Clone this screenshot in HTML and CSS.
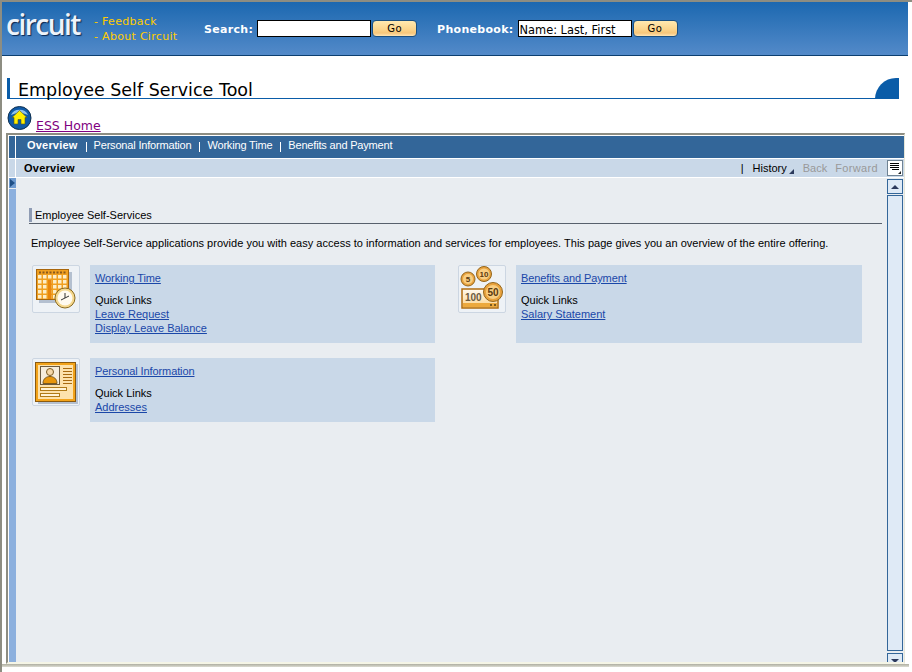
FILE: index.html
```html
<!DOCTYPE html>
<html lang="en">
<head>
    <meta charset="UTF-8">
    <meta name="viewport" content="width=device-width, initial-scale=1.0">
    <title>Employee Self Service Tool</title>
    <link rel="stylesheet" href="styles.css">
</head>
<body>
<div class="page">

    <div class="topbar">
        <div class="logo">circuit</div>
        <ul class="toplinks">
            <li><a href="#">- Feedback</a></li>
            <li><a href="#">- About Circuit</a></li>
        </ul>
        <form class="topsearch search-main">
            <label for="search">Search:</label>
            <input type="text" id="search">
            <button type="button">Go</button>
        </form>
        <form class="topsearch search-phone">
            <label for="phone">Phonebook:</label>
            <input type="text" id="phone" value="Name: Last, First">
            <button type="button">Go</button>
        </form>
    </div>

    <div class="titlebar">
        <h1>Employee Self Service Tool</h1>
        <div class="title-corner"></div>
    </div>

    <div class="homerow">
        <svg class="home-icon" width="25" height="24" viewBox="0 0 25 24">
            <circle cx="12.5" cy="12" r="11.5" fill="#0f5aa8" stroke="#10304f"/>
            <path d="M4 9a9 8 0 0 1 17 0a14 9 0 0 0-17 0z" fill="#8fc0ea"/>
            <path d="M12.5 4.5L20 11.5H18V18H14V13.5H11V18H7V11.5H5z" fill="#ffee00" stroke="#5a5a10" stroke-width=".6"/>
        </svg>
        <a href="#" class="homelink">ESS Home</a>
    </div>

    <div class="portal">
        <div class="tabbar">
            <div class="tab-strip"></div>
            <ul class="tabs">
                <li class="active">Overview</li>
                <li>Personal Information</li>
                <li>Working Time</li>
                <li>Benefits and Payment</li>
            </ul>
        </div>

        <div class="pagebar">
            <div class="pagebar-strip"></div>
            <div class="pagebar-title">Overview</div>
            <div class="history">
                <span class="sep">|</span>
                <span class="hist-link">History<i class="corner"></i></span>
                <span class="disabled">Back</span>
                <span class="disabled forward">Forward</span>
            </div>
            <div class="menu-btn">
                <svg width="14" height="14" viewBox="0 0 14 14">
                    <path d="M2 2.500h9M2 4.500h9M2 6.500h9M4 8.500h7" stroke="#000" fill="none"/>
                    <path d="M13 10v3h-3z" fill="#222"/>
                </svg>
            </div>
        </div>

        <div class="work">
            <div class="nav-strip"><div class="nav-toggle"></div></div>

            <div class="content">
                <h2 class="section-head"><span>Employee Self-Services</span></h2>
                <p class="intro">Employee Self-Service applications provide you with easy access to information and services for employees. This page gives you an overview of the entire offering.</p>

                <div class="cards">
                    <div class="card">
                        <div class="card-icon">
                            <svg width="46" height="46" viewBox="0 0 46 46">
                                <defs>
                                    <pattern id="calCells" x="5" y="9" width="5" height="5" patternUnits="userSpaceOnUse">
                                        <rect width="3.500" height="3.500" fill="#fdeec8"/>
                                    </pattern>
                                </defs>
                                <rect x="6" y="6" width="33" height="31" fill="#b4c0d0"/>
                                <rect x="3.500" y="3.500" width="32" height="30" fill="#f0a020" stroke="#a8660c"/>
                                <path d="M6 6.500h28" stroke="#8a5a1c" stroke-dasharray="2 1.500" stroke-width="2"/>
                                <rect x="5" y="9" width="29" height="24" fill="url(#calCells)"/>
                                <rect x="15" y="14" width="3.500" height="19" fill="#e8860c"/>
                                <circle cx="32" cy="32" r="10" fill="#f5d88e" stroke="#8a6a20"/>
                                <circle cx="32" cy="32" r="7.500" fill="#fffaf0"/>
                                <path d="M32 27v5l-4 2M32 32l4-2" stroke="#333" fill="none"/>
                            </svg>
                        </div>
                        <div class="card-body">
                            <a href="#" class="card-title">Working Time</a>
                            <div class="quick">Quick Links</div>
                            <a href="#">Leave Request</a>
                            <a href="#">Display Leave Balance</a>
                        </div>
                    </div>

                    <div class="card card-right">
                        <div class="card-icon">
                            <svg width="46" height="46" viewBox="0 0 46 46">
                                <defs>
                                    <linearGradient id="billFill" x1="0" y1="0" x2="0" y2="1">
                                        <stop offset="0" stop-color="#fffaf0"/>
                                        <stop offset="1" stop-color="#fcd48e"/>
                                    </linearGradient>
                                </defs>
                                <rect x="3" y="23" width="36" height="19" fill="url(#billFill)" stroke="#b06c10" stroke-width="1.500"/>
                                <rect x="4" y="37" width="34" height="4" fill="#eca93e"/>
                                <path d="M31 39h2M35 39h2" stroke="#7a5a20" stroke-width="2"/>
                                <text x="6" y="35" class="bill-text">100</text>
                                <circle cx="9" cy="13" r="7" fill="#e8a23e" stroke="#94661c"/>
                                <circle cx="9" cy="13" r="5" fill="#f8ce82"/>
                                <text x="9" y="16" class="coin-text">5</text>
                                <circle cx="25" cy="8" r="7.500" fill="#e8a23e" stroke="#94661c"/>
                                <circle cx="25" cy="8" r="5.500" fill="#f8ce82"/>
                                <text x="25" y="11" class="coin-text">10</text>
                                <circle cx="34" cy="26" r="9.500" fill="#e8a23e" stroke="#94661c"/>
                                <circle cx="34" cy="26" r="7" fill="#f8ce82"/>
                                <text x="34" y="30" class="coin-big">50</text>
                            </svg>
                        </div>
                        <div class="card-body">
                            <a href="#" class="card-title">Benefits and Payment</a>
                            <div class="quick">Quick Links</div>
                            <a href="#">Salary Statement</a>
                        </div>
                    </div>

                    <div class="card card-short">
                        <div class="card-icon">
                            <svg width="46" height="46" viewBox="0 0 46 46">
                                <rect x="5" y="5" width="40" height="40" fill="#b4c0d0"/>
                                <rect x="2.500" y="3.500" width="40" height="39" fill="#f2a31a" stroke="#8a5a10"/>
                                <rect x="5" y="6" width="35" height="34" fill="#fde2ac"/>
                                <rect x="7.500" y="7.500" width="19" height="18" fill="#f6eddc" stroke="#6a5a40"/>
                                <circle cx="17" cy="13" r="3.500" fill="#f6d8a8" stroke="#7a5a20"/>
                                <path d="M10 24.500c0-5 3.500-7 7-7s7 2 7 7z" fill="#e8960c" stroke="#7a5a20"/>
                                <path d="M30 9.500h9M30 12.500h9M30 15.500h9M30 18.500h9M30 21.500h9M30 24.500h9" stroke="#a86a10"/>
                                <rect x="7.500" y="28.500" width="26" height="3" fill="#fff3d8" stroke="#b07a18"/>
                                <rect x="7.500" y="34.500" width="19" height="3" fill="#fff3d8" stroke="#b07a18"/>
                            </svg>
                        </div>
                        <div class="card-body">
                            <a href="#" class="card-title">Personal Information</a>
                            <div class="quick">Quick Links</div>
                            <a href="#">Addresses</a>
                        </div>
                    </div>
                </div>
            </div>

            <div class="scrollbar">
                <div class="sb-btn"><span class="arrow-up"></span></div>
                <div class="sb-thumb"></div>
                <div class="sb-btn sb-down"><span class="arrow-down"></span></div>
            </div>
        </div>
    </div>

    <div class="bottomband"></div>
</div>
</body>
</html>
```

FILE: styles.css
```css
* {
    box-sizing: border-box;
}

html, body {
    margin: 0;
    padding: 0;
    height: 100%;
    overflow: hidden;
    background-color: #fff;
}

body {
    font-family: "Liberation Sans", Arial, sans-serif;
    font-size: 11px;
    color: #000;
}

.page {
    height: 672px;
    border-top: 2px solid #8d8d82;
    border-left: 2px solid #8d8d82;
    padding-right: 4px;
    display: flex;
    flex-direction: column;
}

/* top blue header */
.topbar {
    height: 54px;
    flex: none;
    background: linear-gradient(#1c68b0, #538ac9);
    border-bottom: 1px solid #0c3f70;
    display: flex;
    align-items: flex-start;
    font-family: "DejaVu Sans", sans-serif;
}

.logo {
    width: 85px;
    margin-left: 4px;
    margin-top: 4px;
    font-family: "Open Sans", sans-serif;
    font-size: 28px;
    font-weight: 600;
    line-height: 36px;
    letter-spacing: -1.5px;
    color: #eef3fa;
    text-shadow: 1px 1px 1px #0a2650;
}

.toplinks {
    list-style: none;
    margin: 12px 0 0 3px;
    padding: 0;
    width: 110px;
    font-size: 11px;
    line-height: 15px;
    letter-spacing: .3px;
}

.toplinks a {
    color: #ffcc00;
    text-decoration: none;
}

.topsearch {
    display: flex;
    align-items: center;
    margin: 18px 0 0;
}

.search-phone {
    margin-left: 20px;
}

.topsearch label {
    color: #fff;
    font-size: 11px;
    font-weight: bold;
    letter-spacing: .3px;
    margin-right: 4px;
    padding-top: 2px;
}

.topsearch input {
    width: 114px;
    height: 17px;
    padding: 3px 1px 0;
    border: 1px solid #000;
    border-radius: 0;
    background-color: #fff;
    font-family: "DejaVu Sans", sans-serif;
    font-size: 11.4px;
    color: #000;
}

.topsearch button {
    width: 45px;
    height: 17px;
    margin-left: 1px;
    padding: 0;
    border: 1px solid #1a4f80;
    border-radius: 4px;
    background: linear-gradient(#ffe9b0, #fbd58c 55%, #f7c67a 80%, #ffe5b5);
    font-family: "DejaVu Sans", sans-serif;
    font-size: 10px;
    letter-spacing: .5px;
    color: #000;
}

/* page title */
.titlebar {
    margin: 22px 0 0 5px;
    width: 892px;
    height: 21px;
    flex: none;
    border-left: 3px solid #0a5ca8;
    border-bottom: 1px solid #0a5ca8;
    display: flex;
    justify-content: space-between;
    align-items: flex-end;
}

.titlebar h1 {
    margin: 0 0 -2px 8px;
    font-family: "DejaVu Sans", sans-serif;
    font-size: 17.5px;
    line-height: 20px;
    font-weight: normal;
    white-space: nowrap;
}

.title-corner {
    width: 24px;
    height: 21px;
    margin-bottom: -1px;
    background-color: #0a5ca8;
    border-top-left-radius: 22px;
}

.homerow {
    height: 26px;
    flex: none;
    margin: 8px 0 0 5px;
    display: flex;
    align-items: flex-end;
}

.home-icon {
    margin-bottom: 3px;
}

.homelink {
    margin-left: 4px;
    font-family: "DejaVu Sans", sans-serif;
    font-size: 12.5px;
    line-height: 15px;
    color: #800080;
}

/* inner portal frame */
.portal {
    width: 899px;
    height: 531px;
    flex: none;
    margin-left: 4px;
    border-top: 2px solid #8d8d82;
    border-left: 2px solid #8d8d82;
    border-bottom: 2px solid #f5f5e6;
    border-right: 1px solid #e6e6d8;
    padding: 1px 0 0 1px;
    display: flex;
    flex-direction: column;
}

.bottomband {
    height: 3px;
    flex: none;
    margin-right: -1px;
    background: linear-gradient(#aeaea0, #dcdcd2);
}

.tabbar {
    height: 22px;
    flex: none;
    display: flex;
    background-color: #336699;
}

.tab-strip {
    width: 7px;
    border-right: 1px solid #fff;
}

.tabs {
    list-style: none;
    margin: 0;
    padding: 0 0 0 3px;
    display: flex;
    align-items: center;
    height: 18px;
    color: #fff;
    letter-spacing: -.18px;
}

.tabs li {
    padding: 0 8px;
    position: relative;
    white-space: nowrap;
}

.tabs li + li::before {
    content: "";
    position: absolute;
    left: 0;
    top: 3px;
    height: 10px;
    border-left: 1px solid #fff;
}

.tabs .active {
    font-weight: bold;
    letter-spacing: .2px;
}

.pagebar {
    height: 18px;
    flex: none;
    margin-top: 1px;
    display: flex;
    align-items: center;
    background-color: #c9d8e8;
}

.pagebar-strip {
    width: 7px;
    height: 100%;
    border-right: 1px solid #fff;
}

.pagebar-title {
    margin-left: 8px;
    font-weight: bold;
    letter-spacing: .25px;
}

.history {
    margin-left: auto;
    display: flex;
    gap: 10px;
    align-items: center;
}

.sep {
    margin-right: -1px;
}

.hist-link {
    position: relative;
    padding-right: 7px;
    margin-right: -1px;
}

.corner {
    position: absolute;
    right: 0;
    bottom: 0;
    width: 0;
    height: 0;
    border-left: 5px solid transparent;
    border-bottom: 5px solid #2c3a5c;
}

.disabled {
    color: #999;
}

.forward {
    margin-left: -2px;
    letter-spacing: .35px;
}

.menu-btn {
    width: 16px;
    height: 16px;
    flex: none;
    margin: 0 1px 0 9px;
    border: 1px solid #6f8394;
    background-color: #fff;
}

.menu-btn svg {
    display: block;
}

.work {
    flex: 1;
    min-height: 0;
    margin-top: 1px;
    display: flex;
    overflow: hidden;
    background-color: #e9edf1;
}

.nav-strip {
    width: 7px;
    flex: none;
    background-color: #8cb0de;
}

.nav-toggle {
    height: 11px;
    background-color: #6f9bd0;
    border-bottom: 1px solid #e9edf1;
    position: relative;
}

.nav-toggle::after {
    content: "";
    position: absolute;
    left: 1px;
    top: 1px;
    border-left: 5px solid #1e4f86;
    border-top: 4px solid transparent;
    border-bottom: 4px solid transparent;
}

.content {
    flex: 1;
    min-width: 0;
    padding: 30px 5px 0 13px;
}

.section-head {
    margin: 0;
    padding-bottom: 1px;
    border-bottom: 1px solid #57606c;
    font-size: 11px;
    font-weight: normal;
}

.section-head span {
    display: block;
    height: 14px;
    padding-left: 3px;
    border-left: 3px solid #8f9cb4;
    line-height: 14px;
}

.intro {
    margin: 12px 0 0 2px;
    line-height: 14px;
    white-space: nowrap;
    letter-spacing: .018px;
}

.cards {
    margin: 15px 0 0 3px;
    display: grid;
    grid-template-columns: 403px 404px;
    column-gap: 23px;
    row-gap: 15px;
}

.card {
    display: flex;
    gap: 10px;
    align-items: flex-start;
}

.card-icon {
    width: 48px;
    height: 48px;
    flex: none;
    border: 1px solid #ccd6e2;
    border-radius: 2px;
    background-color: #eef2f6;
}

.card-icon svg {
    display: block;
}

.card-body {
    flex: 1;
    height: 78px;
    padding: 6px 5px 0;
    background-color: #c9d8e8;
    line-height: 14px;
}

.card-short .card-body {
    height: 64px;
}

.card-body a {
    display: block;
    color: #1a47a8;
    text-decoration: underline;
}

.card-title {
    margin-bottom: 8px;
    letter-spacing: -.1px;
}

.bill-text {
    font-family: "Liberation Sans", sans-serif;
    font-size: 10px;
    font-weight: bold;
    fill: #6a5a40;
}

.coin-text {
    font-family: "Liberation Sans", sans-serif;
    font-size: 8px;
    font-weight: bold;
    text-anchor: middle;
    fill: #5a3a10;
}

.coin-big {
    font-family: "Liberation Sans", sans-serif;
    font-size: 10px;
    font-weight: bold;
    text-anchor: middle;
    fill: #5a3a10;
}

/* right scrollbar, runs past the bottom of the frame */
.scrollbar {
    width: 16px;
    flex: none;
    margin-right: 1px;
    display: flex;
    flex-direction: column;
    padding-top: 1px;
}

.sb-btn {
    height: 15px;
    flex: none;
    border: 1px solid #336699;
    background-color: #dfeaf6;
    display: flex;
    align-items: center;
    justify-content: center;
}

.sb-thumb {
    height: 456px;
    flex: none;
    margin: 1px 0 2px;
    border: 1px solid #336699;
    background-color: #dfeaf6;
}

.arrow-up {
    border-left: 4px solid transparent;
    border-right: 4px solid transparent;
    border-bottom: 4px solid #2c3a5c;
}

.arrow-down {
    border-left: 4px solid transparent;
    border-right: 4px solid transparent;
    border-top: 4px solid #2c3a5c;
}
```
